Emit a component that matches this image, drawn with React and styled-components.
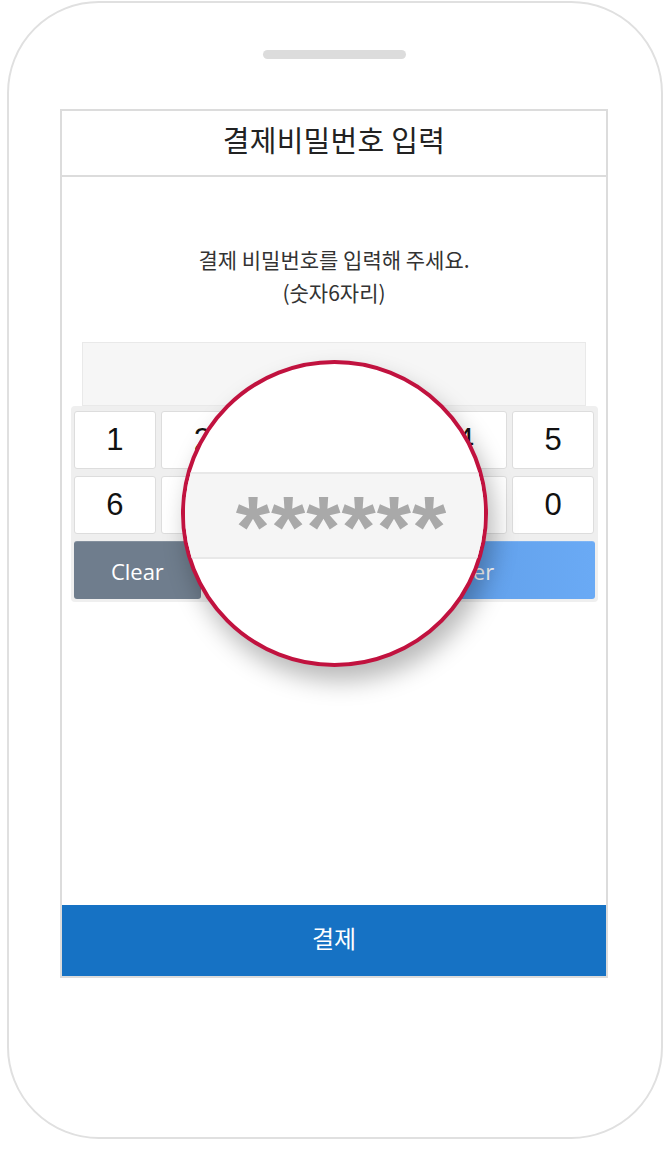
import React from 'react';
import styled, { createGlobalStyle } from 'styled-components';

const colors = {
  frame: "#e0e0e0",
  line: "#dcdcdc",
  ink: "#222222",
  text: "#333333",
  pad: "#efefef",
  key: "#ffffff",
  keyLine: "#dddddd",
  clear: "#6f7d8d",
  enter: "#6aaaf5",
  pay: "#1672c4",
  lens: "#c1123f",
  field: "#f6f6f6",
  star: "#a9a9a9",
};

const GlobalStyle = createGlobalStyle`
  html, body { margin: 0; padding: 0; background: #ffffff; }
  body { font-family: "Noto Sans CJK KR", "Noto Sans", sans-serif; }
`;

const rows = [
  ["1", "2", "3", "", "4", "5"],
  ["6", "7", "8", "9", "", "0"],
];

export default function App() {
  return (
    <>
      <GlobalStyle />
      <Page>
        <Phone>
          <Speaker />
          <Screen>
            <Header>결제비밀번호 입력</Header>
            <Body>
              <Message>
                결제 비밀번호를 입력해 주세요.
                <br />
                (숫자6자리)
              </Message>
              <Field />
              <Keypad>
                {rows.map((row, i) => (
                  <KeyRow key={i}>
                    {row.map((k, j) => <Key key={j}>{k}</Key>)}
                  </KeyRow>
                ))}
                <ActionRow>
                  <Action $bg={colors.clear}>Clear</Action>
                  <Action $bg="#8e99a6">←</Action>
                  <Action $bg={colors.enter} $wide>Enter</Action>
                </ActionRow>
              </Keypad>
              <Lens>
                <LensBand>
                  <Stars>******</Stars>
                </LensBand>
              </Lens>
            </Body>
            <PayButton>결제</PayButton>
          </Screen>
        </Phone>
      </Page>
    </>
  );
}

const Page = styled.div`
  width: 670px;
  height: 1150px;
  padding: 1px 0 0 7px;
  box-sizing: border-box;
`;

const Phone = styled.div`
  width: 656px;
  height: 1138px;
  box-sizing: border-box;
  border: 2px solid ${colors.frame};
  border-radius: 92px;
  background: #fff;
  display: flex;
  flex-direction: column;
  align-items: center;
`;

const Speaker = styled.div`
  width: 143px;
  height: 9px;
  margin-top: 47px;
  margin-left: -1px;
  border-radius: 5px;
  background: #dcdcdc;
`;

const Screen = styled.div`
  width: 548px;
  height: 869px;
  margin-top: 50px;
  margin-left: -2px;
  box-sizing: border-box;
  border: 2px solid ${colors.line};
  display: flex;
  flex-direction: column;
`;

const Header = styled.div`
  height: 66px;
  padding-bottom: 8px;
  box-sizing: border-box;
  border-bottom: 2px solid ${colors.line};
  display: flex;
  align-items: center;
  justify-content: center;
  font-size: 29px;
  font-weight: 400;
  color: ${colors.ink};
  letter-spacing: 0.3px;
`;

const Body = styled.div`
  position: relative;
  flex: 1;
  display: flex;
  flex-direction: column;
  align-items: center;
  padding-top: 66px;
`;

const Message = styled.div`
  font-size: 21px;
  line-height: 33px;
  color: ${colors.text};
  text-align: center;
`;

const Field = styled.div`
  width: 504px;
  height: 64px;
  margin-top: 33px;
  box-sizing: border-box;
  background: ${colors.field};
  border: 1px solid #e9e9e9;
`;

const Keypad = styled.div`
  width: 527px;
  box-sizing: border-box;
  padding: 5px 3px 3px;
  background: ${colors.pad};
  border-radius: 4px;
  display: flex;
  flex-direction: column;
  gap: 7px;
`;

const KeyRow = styled.div`
  display: grid;
  grid-template-columns: repeat(6, 1fr);
  gap: 5px;
`;

const Key = styled.div`
  height: 58px;
  background: ${colors.key};
  border: 1px solid ${colors.keyLine};
  border-radius: 3px;
  box-sizing: border-box;
  display: flex;
  align-items: center;
  justify-content: center;
  font-family: "Liberation Sans", Arial, sans-serif;
  font-size: 31px;
  color: #111;
`;

const ActionRow = styled.div`
  display: grid;
  grid-template-columns: 1fr 1fr 2fr;
  gap: 5px;
`;

const Action = styled.div`
  height: 58px;
  background: ${p => p.$bg};
  border-top: 1px solid rgba(255, 255, 255, 0.15);
  border-radius: 3px;
  box-sizing: border-box;
  display: flex;
  align-items: center;
  justify-content: center;
  font-family: "Open Sans", sans-serif;
  font-size: 22px;
  color: #fff;
  ${p => p.$wide && `background: linear-gradient(90deg, #5a97e0, ${colors.enter});`}
`;

const Lens = styled.div`
  position: absolute;
  left: 119px;
  top: 183px;
  width: 307px;
  height: 307px;
  box-sizing: border-box;
  border: 4px solid ${colors.lens};
  border-radius: 50%;
  background: #fff;
  overflow: hidden;
  box-shadow: 6px 14px 24px rgba(0, 0, 0, 0.28);
  display: flex;
  flex-direction: column;
  justify-content: flex-start;
  padding-top: 108px;
`;

const LensBand = styled.div`
  height: 87px;
  box-sizing: border-box;
  background: #f5f5f5;
  border-top: 2px solid #e8e8e8;
  border-bottom: 2px solid #e8e8e8;
  display: flex;
  align-items: center;
  justify-content: center;
  padding-left: 14px;
`;

const Stars = styled.div`
  font-family: "Liberation Sans", Arial, sans-serif;
  font-weight: 700;
  font-size: 88px;
  line-height: 1;
  letter-spacing: 1px;
  color: ${colors.star};
  transform: translateY(11px);
`;

const PayButton = styled.div`
  height: 71px;
  padding-bottom: 6px;
  box-sizing: border-box;
  background: ${colors.pay};
  display: flex;
  align-items: center;
  justify-content: center;
  color: #fff;
  font-size: 24px;
`;
